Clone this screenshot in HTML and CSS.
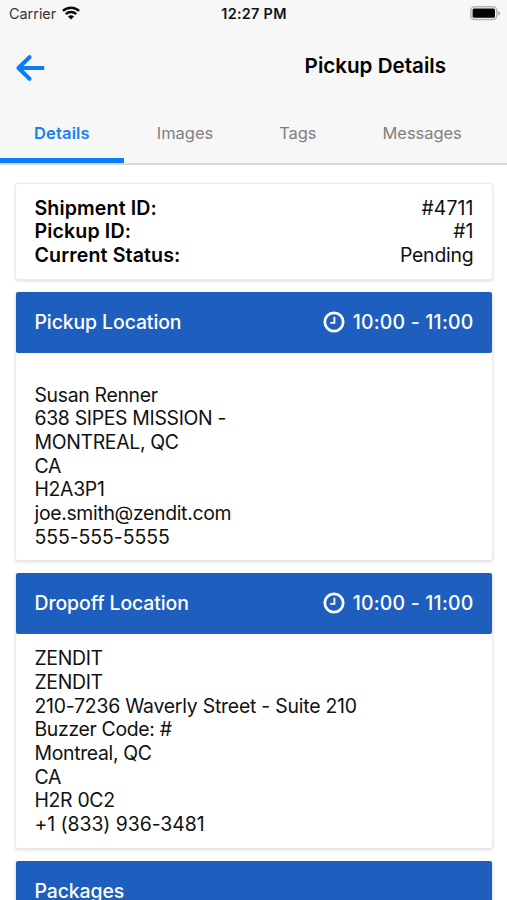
FILE: index.html
```html
<!DOCTYPE html>
<html lang="en">
<head>
<meta charset="utf-8">
<title>Pickup Details</title>
<link rel="stylesheet" href="styles.css">
</head>
<body>
<header class="top">
  <div class="status">
    <div class="carrier"><span>Carrier</span>
      <svg class="wifi" width="18" height="14" viewBox="0 0 18 14" fill="none" stroke="#0c0c0c" stroke-width="2.5"><path d="M.9 4.9C5.4.6 12.6.6 17.1 4.9M3.8 8.1C6.7 5.4 11.3 5.4 14.2 8.1"/><path d="M9 13.6 5.9 10.5Q9 7.8 12.1 10.5Z" fill="#0c0c0c" stroke="none"/></svg>
    </div>
    <div class="time">12:27 PM</div>
    <svg class="battery" width="31" height="15" viewBox="0 0 31 15"><rect x=".8" y=".8" width="26" height="12.7" rx="3.8" fill="#f7f7f7" stroke="#b4b4b4" stroke-width="1.5"/><rect x="2.6" y="2.6" width="22.4" height="9.2" rx="1.6" fill="#050505"/><path d="M28.3 5Q30.2 5.5 30.2 7.2T28.3 9.4Z" fill="#a9a9a9"/></svg>
  </div>
  <div class="nav">
    <svg class="back" width="29" height="26" viewBox="0 0 29 26" fill="none" stroke="#087cf9" stroke-width="4" stroke-linecap="round" stroke-linejoin="round"><path d="M13.5 2.2 2.5 13 13.5 23.8"/><path d="M3 13H28.2" stroke-linecap="butt"/></svg>
    <h1>Pickup Details</h1>
  </div>
  <nav class="tabs">
    <a class="tab active"><span>Details</span></a>
    <a class="tab"><span>Images</span></a>
    <a class="tab"><span>Tags</span></a>
    <a class="tab"><span>Messages</span></a>
  </nav>
</header>
<main class="content">
  <section class="card summary">
    <div class="row"><b>Shipment ID:</b><span class="number">#4711</span></div>
    <div class="row"><b>Pickup ID:</b><span class="number">#1</span></div>
    <div class="row"><b>Current Status:</b><span>Pending</span></div>
  </section>
  <section class="card">
    <div class="head"><span>Pickup Location</span>
      <span class="hours"><svg width="22" height="22" viewBox="0 0 22 22" fill="none" stroke="#fff"><circle cx="11" cy="11" r="9.2" stroke-width="2.7"/><path d="M11.4 5.7V11.9H7.2" stroke-width="1.8"/></svg>10:00 - 11:00</span></div>
    <div class="body pickup">
      <div>Susan Renner</div>
      <div>638 SIPES MISSION -</div>
      <div>MONTREAL, QC</div>
      <div>CA</div>
      <div>H2A3P1</div>
      <div>joe.smith@zendit.com</div>
      <div class="number">555-555-5555</div>
    </div>
  </section>
  <section class="card">
    <div class="head"><span>Dropoff Location</span>
      <span class="hours"><svg width="22" height="22" viewBox="0 0 22 22" fill="none" stroke="#fff"><circle cx="11" cy="11" r="9.2" stroke-width="2.7"/><path d="M11.4 5.7V11.9H7.2" stroke-width="1.8"/></svg>10:00 - 11:00</span></div>
    <div class="body dropoff">
      <div>ZENDIT</div>
      <div>ZENDIT</div>
      <div class="street">210-7236 Waverly Street - Suite 210</div>
      <div>Buzzer Code: #</div>
      <div>Montreal, QC</div>
      <div>CA</div>
      <div>H2R 0C2</div>
      <div class="number">+1 (833) 936-3481</div>
    </div>
  </section>
  <section class="card">
    <div class="head"><span>Packages</span></div>
  </section>
</main>
</body>
</html>
```
FILE: styles.css
```css
* { box-sizing: border-box; }
html, body { height: 900px; overflow: hidden; }
body {
  margin: 0;
  background: #fff;
  color: #111;
  font-family: Inter, "Liberation Sans", sans-serif;
  font-size: 19.4px;
  line-height: 23.67px;
}
.top { height: 165px; background: #f7f7f7; border-bottom: 2px solid #d9d9d9; }
.status {
  display: grid;
  grid-template-columns: 1fr auto 1fr;
  align-items: center;
  height: 28px;
  padding: 0 6px 0 9px;
  font-size: 14.4px;
  line-height: 28px;
}
.carrier { display: flex; align-items: center; gap: 6px; color: #333; }
.wifi { margin-top: -2px; }
.time { position: relative; left: -1px; font-weight: 600; letter-spacing: .3px; }
.battery { justify-self: end; margin-top: -1px; }
.nav { display: flex; align-items: center; justify-content: space-between; height: 75px; padding: 0 61px 0 16px; }
.back { margin-top: 4px; }
h1 { margin: 0; font-size: 20.6px; font-weight: 600; color: #000; }
.tabs { display: flex; height: 60px; font-size: 16.5px; color: #808080; }
.tab { display: flex; align-items: center; padding: 2px 33px 0; position: relative; letter-spacing: -.05px; }
.active { padding: 2px 34px 0; color: #1a80ef; font-weight: 600; letter-spacing: .15px; }
.active::after { content: ""; position: absolute; left: 0; right: 0; bottom: 0; height: 5px; background: #087cf9; }
.content { display: flex; flex-direction: column; gap: 12px; padding: 18px 14px 0 15px; }
.card { border: 1px solid #ebebeb; border-radius: 3px; background: #fff; box-shadow: 0 1px 3px rgba(0, 0, 0, .14); }
.summary { height: 97px; padding: 12.6px 18.5px 11px; }
.row { display: flex; justify-content: space-between; }
.row span { letter-spacing: -.2px; }
.row .number { letter-spacing: .1px; }
.row b { font-size: 19.6px; letter-spacing: .12px; font-weight: 600; color: #000; }
.head {
  display: flex;
  align-items: center;
  justify-content: space-between;
  height: 61px;
  margin-top: -1px;
  padding: 0 18.5px;
  background: #1e5ebe;
  border-radius: 2px;
  color: #fff;
  font-weight: 500;
  letter-spacing: -.08px;
}
.hours { display: flex; align-items: center; gap: 7.5px; letter-spacing: .23px; }
.body { padding: 0 18.5px; letter-spacing: -.32px; }
.pickup { padding-top: 30.7px; padding-bottom: 10.6px; }
.dropoff { padding-top: 13.2px; padding-bottom: 11.4px; }
.street { letter-spacing: -.22px; }
.number { letter-spacing: -.05px; }
```
